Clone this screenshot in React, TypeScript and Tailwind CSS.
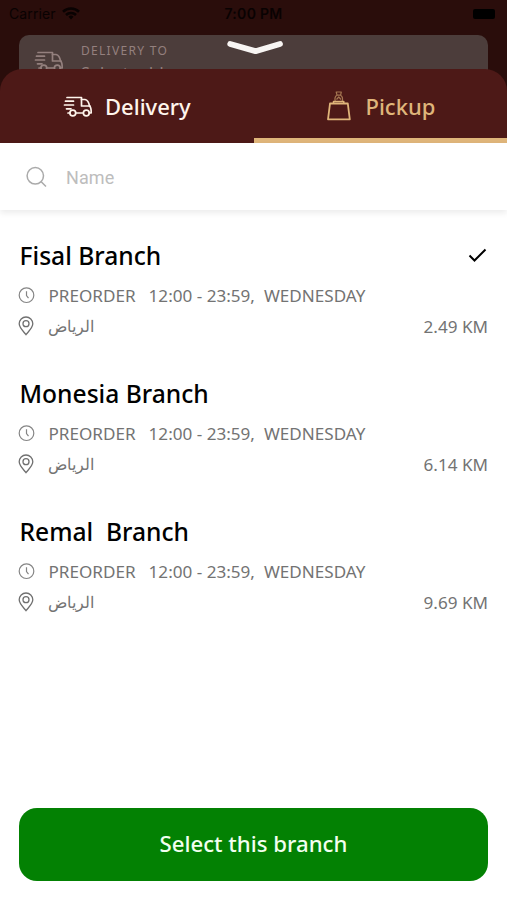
import React, { useState } from "react";

const branches = [
  { name: "Fisal Branch", distance: "2.49 KM" },
  { name: "Monesia Branch", distance: "6.14 KM" },
  { name: "Remal  Branch", distance: "9.69 KM" },
];

const TruckIcon: React.FC = () => (
  <svg
    className="shrink-0"
    width="30"
    height="24"
    viewBox="0 0 30 24"
    fill="none"
    stroke="currentColor"
    strokeWidth="1.7"
    strokeLinecap="round"
    strokeLinejoin="round"
  >
    <path d="M4 2.5H18.5V11H27M2.5 6.2H10.5M1.5 10H10.5M3.5 13.8H8" />
    <path d="M18.5 4.5H22C24.5 5 26 8 26.5 11C28 12 28.3 13 28.2 18H26.5M5 18H6.7M13 18H20" />
    <circle cx="9.8" cy="18" r="2.9" />
    <circle cx="23.3" cy="18" r="2.9" />
  </svg>
);

const BagIcon: React.FC = () => (
  <svg
    className="shrink-0"
    width="26"
    height="32"
    viewBox="0 0 26 32"
    fill="none"
    stroke="currentColor"
    strokeLinejoin="round"
  >
    <path d="M4 13.5H21.8L23.8 29.3H2Z" strokeWidth="1.8" />
    <path d="M7.5 13V11.5H17.8V13" strokeWidth="1.5" />
    <path
      d="M9.2 11C8.5 8 9.5 6 11 5.2L10.2 2H15.3L14.6 5.2C16.5 6.5 17 8.5 16.2 11M11 5.2H14.6M10.5 9.5L12.8 7L15 9.5"
      strokeWidth="1.2"
      opacity="0.6"
    />
  </svg>
);

const ClockIcon: React.FC = () => (
  <svg width="18" height="18" viewBox="0 0 18 18" fill="none" stroke="#858585">
    <circle cx="8.5" cy="8.2" r="7.3" strokeWidth="1.2" />
    <path d="M8.5 4.2V8.5L10.5 11.2" strokeWidth="1.2" />
  </svg>
);

const PinIcon: React.FC = () => (
  <svg width="16" height="20" viewBox="0 0 16 20" fill="none" stroke="#707070">
    <path
      d="M8 18.7C5.5 15.5 1.2 11.6 1.2 7.8A6.8 6.8 0 0 1 14.8 7.8C14.8 11.6 10.5 15.5 8 18.7Z"
      strokeWidth="1.3"
    />
    <circle cx="8" cy="7.7" r="3" strokeWidth="1.3" />
  </svg>
);

const App: React.FC = () => {
  const [selected, setSelected] = useState(0);

  return (
    <div className="flex h-[900px] w-[507px] flex-col overflow-hidden bg-white font-['Noto_Sans',sans-serif]">
      {/* Dimmed screen behind the sheet */}
      <header className="h-[100px] shrink-0 bg-[#2a0d0b]">
        <div className="grid h-[35px] grid-cols-3 items-center px-[9px] pb-[8px] font-[Inter,sans-serif] text-[#090202]">
          <div className="flex items-center gap-[6px]">
            <span className="text-[14px] tracking-[0.1px]">Carrier</span>
            <svg width="18" height="13" viewBox="0 0 18 13" fill="none" stroke="currentColor" strokeWidth="2.6">
              <path d="M1 4.8A11.5 11.5 0 0 1 17 4.8M4 8A7.2 7.2 0 0 1 14 8" />
              <path d="M6.5 9.8L9 12.5L11.5 9.8A3.6 3.6 0 0 0 6.5 9.8Z" fill="currentColor" stroke="none" />
            </svg>
          </div>
          <span className="text-center text-[14px] font-semibold tracking-[0.3px]">7:00 PM</span>
          <div className="mr-[3px] h-[10px] w-[22px] justify-self-end rounded-[2px] bg-black" />
        </div>
        <div className="relative mx-[19px] flex h-[65px] rounded-t-[10px] bg-[#4c3d3b] pl-[15px] pt-[8px] text-[#94807e]">
          <div className="pt-[7px]">
            <TruckIcon />
          </div>
          <div className="ml-[17px]">
            <div className="text-[12px] leading-[15px] tracking-[1.3px]">DELIVERY TO</div>
            <div className="mt-[5px] text-[16px] leading-[20px] tracking-[0.6px]">Select address</div>
          </div>
          <svg
            className="absolute left-[208px] top-[5px]"
            width="57"
            height="15"
            viewBox="0 0 57 15"
            fill="none"
            stroke="#f8f5f3"
            strokeWidth="5.8"
            strokeLinecap="round"
            strokeLinejoin="round"
          >
            <path d="M3.2 4L28.5 11.2L53 4" />
          </svg>
        </div>
      </header>

      <main className="relative -mt-[31px] flex grow flex-col overflow-hidden">
        <div className="grid h-[74px] shrink-0 grid-cols-2 rounded-t-[22px] bg-[#4d1917] text-[22px] font-medium">
          <button className="flex items-center pl-[63px] text-[#fff5ec]">
            <div className="pt-[1px]">
              <TruckIcon />
            </div>
            <span className="ml-[12px]">Delivery</span>
          </button>
          <button className="flex items-center border-b-[5px] border-[#dfb57a] pl-[72px] pt-[5px] text-[#dfb57a]">
            <BagIcon />
            <span className="ml-[14px]">Pickup</span>
          </button>
        </div>

        <label className="flex h-[67px] shrink-0 items-center bg-white pl-[26px] shadow-[0_3px_6px_rgba(0,0,0,0.08)]">
          <svg width="22" height="22" viewBox="0 0 22 22" fill="none" stroke="#aaaaaa" strokeWidth="1.5">
            <circle cx="9.3" cy="9.8" r="8.2" />
            <path d="M15.2 15.7L20 20.5" />
          </svg>
          <input
            className="ml-[18px] w-[300px] pt-[2px] font-[Roboto,sans-serif] text-[18px] tracking-[0.1px] outline-none placeholder:text-[#bdbdbd]"
            placeholder="Name"
          />
        </label>

        <ul className="grow pt-[26px]">
          {branches.map((branch, index) => (
            <li
              key={branch.name}
              className="h-[138px] px-[19px] text-[17.1px] text-[#737373]"
              onClick={() => setSelected(index)}
            >
              <div className="flex h-[40px] items-center justify-between text-black">
                <h2 className="whitespace-pre pl-[0.5px] text-[24.6px] font-medium">{branch.name}</h2>
                {selected === index && (
                  <svg
                    className="mr-[1px]"
                    width="19"
                    height="16"
                    viewBox="0 0 19 16"
                    fill="none"
                    stroke="currentColor"
                    strokeWidth="2"
                  >
                    <path d="M1.5 7.5L6.5 12.5L17.5 1.5" />
                  </svg>
                )}
              </div>
              <div className="-ml-[1px] flex h-[40px] items-center">
                <ClockIcon />
                <span className="ml-[12.5px]">PREORDER</span>
                <span className="ml-[13px]">12:00 - 23:59,</span>
                <span className="ml-[9px]">WEDNESDAY</span>
              </div>
              <div className="-ml-[1px] -mt-[5px] flex h-[30px] items-center">
                <PinIcon />
                <span className="ml-[14px] pt-[2px] text-[15.7px]" dir="rtl">
                  الرياض
                </span>
                <span className="ml-auto pt-[1px]">{branch.distance}</span>
              </div>
            </li>
          ))}
        </ul>

        <button className="mx-[19px] mb-[19px] h-[73px] shrink-0 rounded-[18px] bg-[#038103] pb-[2px] text-[22.2px] font-medium text-[#f2fff0]">
          Select this branch
        </button>
      </main>
    </div>
  );
};

export default App;
